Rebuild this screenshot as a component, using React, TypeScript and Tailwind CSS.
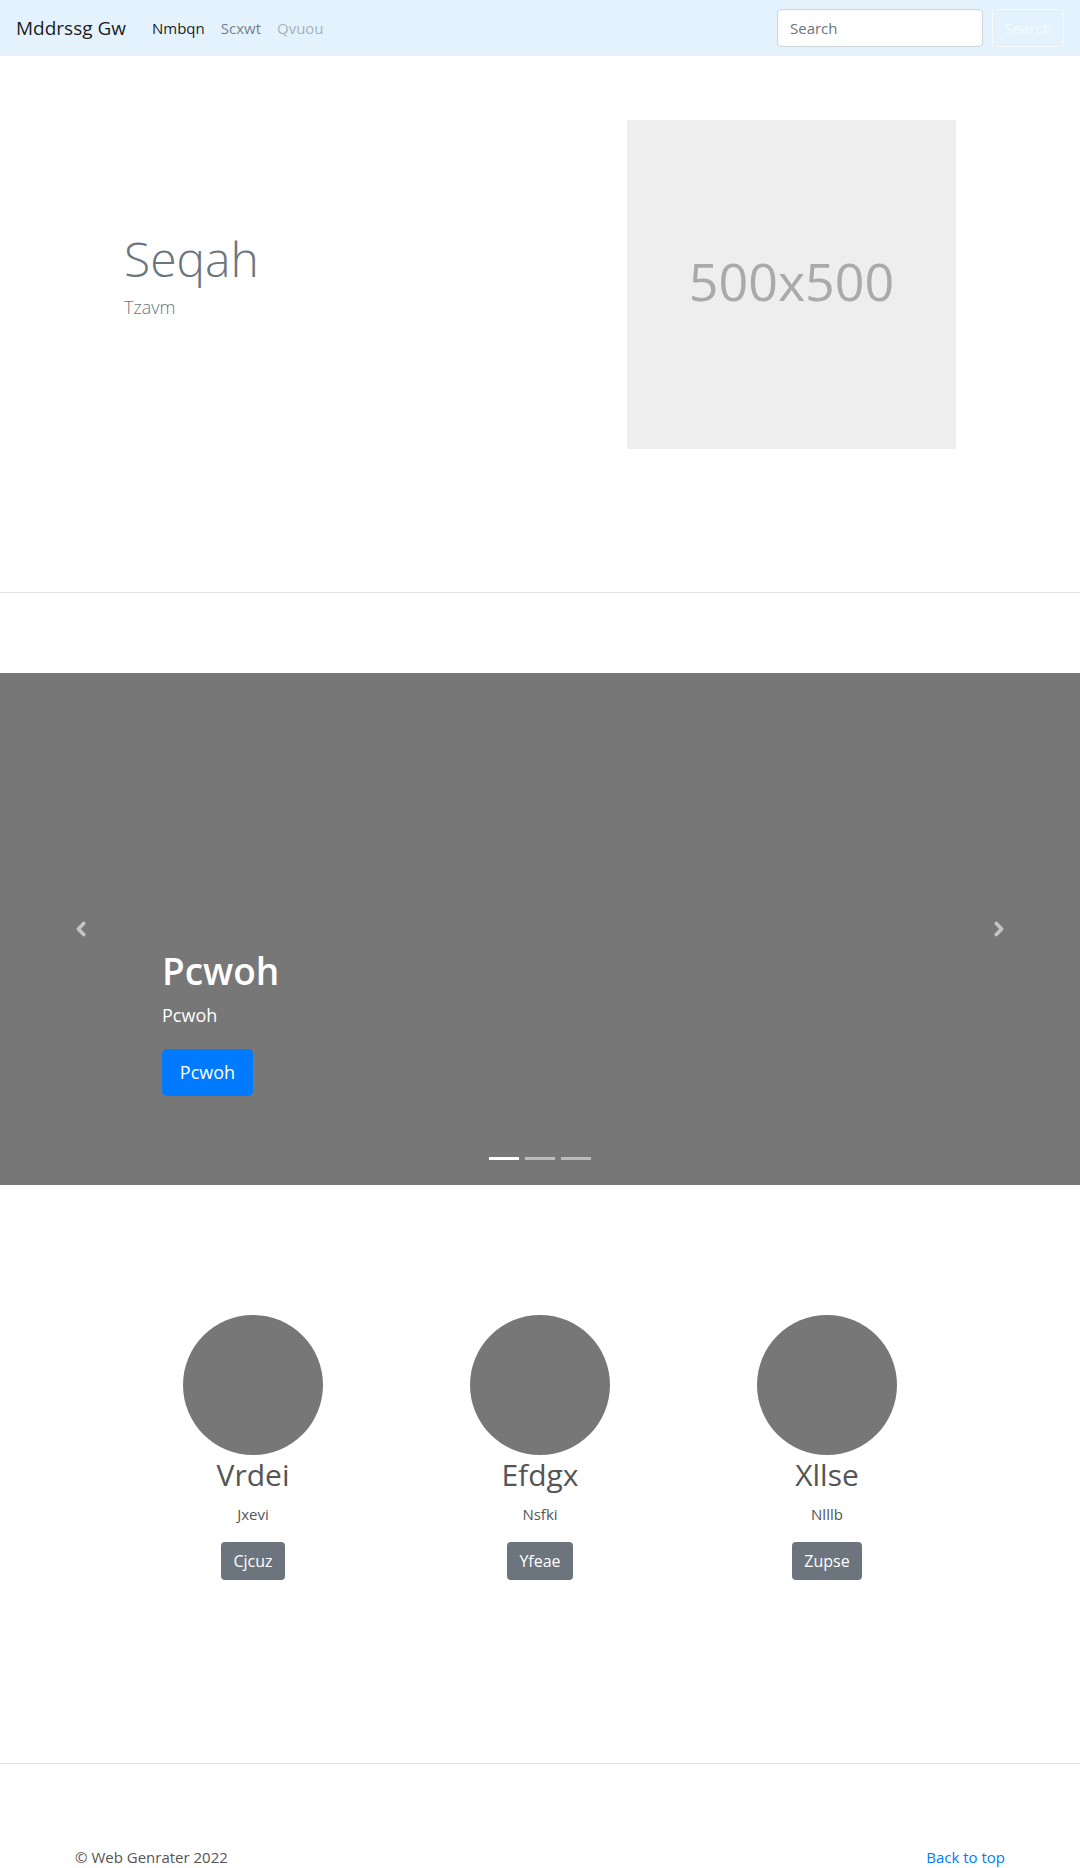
import { ChevronLeft, ChevronRight } from 'lucide-react';

const people = [
  { name: 'Vrdei', sub: 'Jxevi', btn: 'Cjcuz' },
  { name: 'Efdgx', sub: 'Nsfki', btn: 'Yfeae' },
  { name: 'Xllse', sub: 'Nlllb', btn: 'Zupse' },
];

const App = () => {
  return (
    <div className="min-h-screen bg-white font-['Open_Sans',sans-serif] text-[#212529]">
      {/* Navbar */}
      <nav className="flex h-14 items-center bg-[#e3f2fd] pl-4 pr-4">
        <a className="mr-[26px] text-[19px] text-[rgba(0,0,0,0.9)]">Mddrssg Gw</a>
        <ul className="flex items-center gap-4 text-[15px]">
          <li className="text-[rgba(0,0,0,0.9)]">Nmbqn</li>
          <li className="text-[rgba(0,0,0,0.5)]">Scxwt</li>
          <li className="text-[rgba(0,0,0,0.3)]">Qvuou</li>
        </ul>
        <div className="ml-auto flex items-center gap-[9px]">
          <input
            placeholder="Search"
            className="h-[38px] w-[206px] rounded border border-[#ced4da] bg-white px-3 text-[15px] placeholder:text-[#6c757d] outline-none"
          />
          <button className="h-[38px] w-[72px] rounded border border-[#f8f9fa] text-[15px] text-[#f8f9fa]">
            Search
          </button>
        </div>
      </nav>

      {/* Hero */}
      <section className="flex h-[537px] border-b border-[#e0e0e0] pt-16">
        <div className="w-[540px] pl-[124px] pt-[110px]">
          <h1 className="text-[48px] font-light leading-[1.2] text-[#6c757d]">Seqah</h1>
          <p className="mt-[6px] text-[18px] font-light text-[#6c757d]">Tzavm</p>
        </div>
        <div className="pl-[87px]">
          <div className="flex h-[329px] w-[329px] items-center justify-center bg-[#eeeeee] pb-[8px] text-[52px] text-[#aaaaaa]">
            500x500
          </div>
        </div>
      </section>

      {/* Carousel */}
      <section className="relative mt-[80px] h-[512px] bg-[#777777]">
        <button className="absolute left-0 top-0 flex h-full w-[15%] items-center justify-center text-[#c4c4c4]">
          <ChevronLeft size={22} strokeWidth={4} />
        </button>
        <button className="absolute right-0 top-0 flex h-full w-[15%] items-center justify-center text-[#c4c4c4]">
          <ChevronRight size={22} strokeWidth={4} />
        </button>
        <div className="absolute bottom-[89px] left-[15%] text-white">
          <h2 className="text-[37px] font-semibold leading-[1.2]">Pcwoh</h2>
          <p className="mt-[9px] text-[18px]">Pcwoh</p>
          <button className="mt-[20px] h-[47px] w-[91px] rounded-[5px] bg-[#007bff] text-[18px] text-white">
            Pcwoh
          </button>
        </div>
        <div className="absolute bottom-[25px] left-0 right-0 flex justify-center gap-[6px]">
          <span className="h-[3px] w-[30px] bg-white" />
          <span className="h-[3px] w-[30px] bg-white/50" />
          <span className="h-[3px] w-[30px] bg-white/50" />
        </div>
      </section>

      {/* People */}
      <section className="grid grid-cols-[repeat(3,287px)] justify-center pb-[183px] pt-[130px]">
        {people.map((p) => (
          <div key={p.name} className="flex flex-col items-center">
            <div className="h-[140px] w-[140px] rounded-full bg-[#777777]" />
            <h3 className="mt-[2px] text-[30px] leading-[1.2] text-[#555555]">{p.name}</h3>
            <p className="mt-[10px] text-[15px] text-[#555555]">{p.sub}</p>
            <button className="mt-[16px] h-[38px] rounded bg-[#6c757d] px-3 text-[16px] text-white">
              {p.btn}
            </button>
          </div>
        ))}
      </section>

      {/* Footer */}
      <footer className="border-t border-[#e0e0e0] px-[75px] pt-[82px]">
        <div className="flex justify-between text-[15px]">
          <p className="text-[#555555]">© Web Genrater 2022</p>
          <a className="text-[#007bff]">Back to top</a>
        </div>
      </footer>
    </div>
  );
};

export default App;
